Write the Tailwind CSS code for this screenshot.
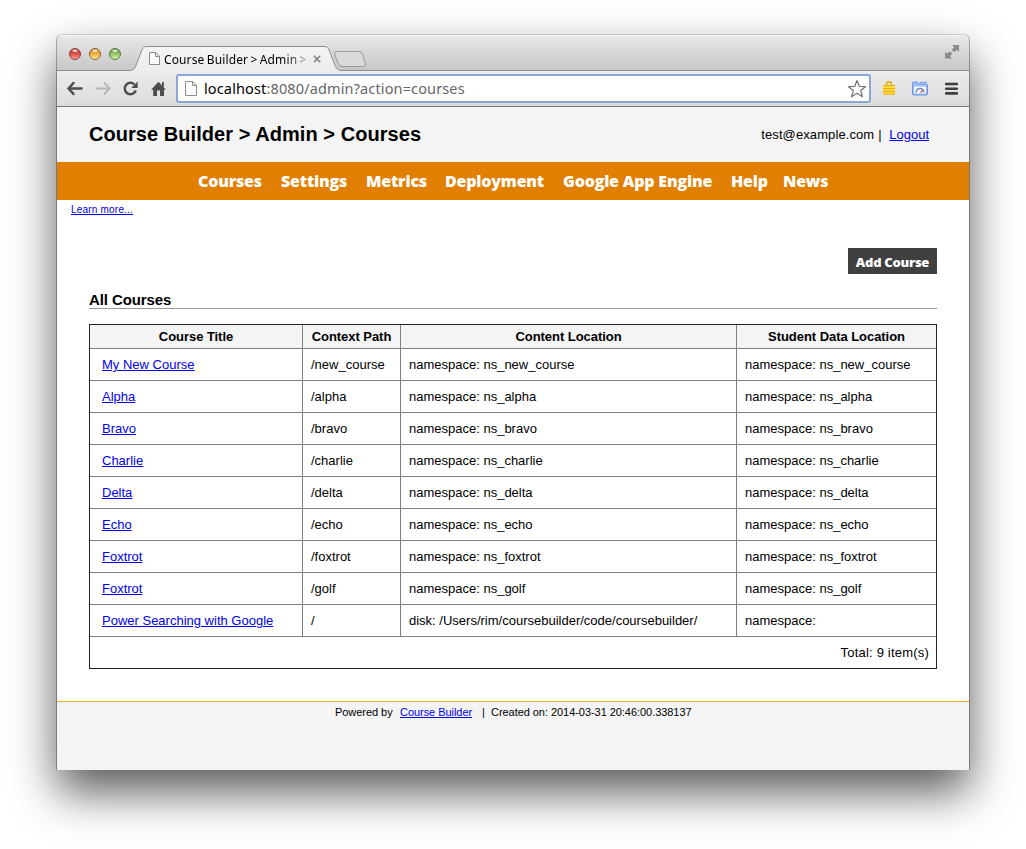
<!DOCTYPE html>
<html lang="en">
<head>
<meta charset="utf-8">
<title>Course Builder &gt; Admin &gt; Courses</title>
<script src="https://cdn.jsdelivr.net/npm/@tailwindcss/browser@4"></script>
</head>
<body class="h-[849px] overflow-hidden bg-white pt-[35px] pl-[57px] font-['Liberation_Sans',Arial,sans-serif] text-[13px] text-black">
<div class="flex h-[735px] w-[912px] flex-col rounded-t-[5px] bg-white shadow-[-1px_0_0_0_rgba(0,0,0,0.3),1px_0_0_0_rgba(0,0,0,0.3),0_-1px_0_0_rgba(0,0,0,0.15),0_22px_46px_rgba(0,0,0,0.65)]">

  <!-- Tab strip -->
  <div class="relative flex h-[36px] shrink-0 items-start">
    <svg class="absolute inset-0 rounded-t-[5px]" width="912" height="36" viewBox="0 0 912 36">
      <defs>
        <linearGradient id="strip" x1="0" y1="0" x2="0" y2="1"><stop offset="0" stop-color="#e9e9e9"/><stop offset="1" stop-color="#c6c6c6"/></linearGradient>
        <linearGradient id="tab" x1="0" y1="0" x2="0" y2="1"><stop offset="0" stop-color="#f4f4f4"/><stop offset="1" stop-color="#ececec"/></linearGradient>
        <linearGradient id="red" x1="0" y1="0" x2="0" y2="1"><stop offset="0" stop-color="#b53a33"/><stop offset=".5" stop-color="#dc5048"/><stop offset="1" stop-color="#ffa79b"/></linearGradient>
        <linearGradient id="amber" x1="0" y1="0" x2="0" y2="1"><stop offset="0" stop-color="#c07a22"/><stop offset=".5" stop-color="#eeb040"/><stop offset="1" stop-color="#fff09a"/></linearGradient>
        <linearGradient id="green" x1="0" y1="0" x2="0" y2="1"><stop offset="0" stop-color="#5c8a3c"/><stop offset=".5" stop-color="#93c765"/><stop offset="1" stop-color="#dcf7ae"/></linearGradient>
      </defs>
      <rect width="912" height="36" fill="url(#strip)"/>
      <path d="M0 .5H912" stroke="#f6f6f6"/>
      <path d="M0 35.5H74C78 35 78 33 79.500 29L84.500 16C86 12.500 87 11.500 90 11.500H267C270 11.500 271 12.500 272.500 16L277.500 29C279 33 280 35 284 35.500H912V37H0Z" fill="url(#tab)"/>
      <path d="M0 35.500H73C77 35 78 33 79.500 29L84.500 16C86 12.500 87 11.500 90 11.500H267C270 11.500 271 12.500 272.500 16L277.500 29C279 33 280 35 284 35.500H912" fill="none" stroke="#8e8e8e"/>
      <path d="M279.500 16.500H302Q304.500 16.500 305.500 19L308.300 28.500Q309.200 31.500 306.500 31.500H285Q282.500 31.500 281.500 29L277.700 19.500Q277 16.500 279.500 16.500Z" fill="#d9d9d9" stroke="#9a9a9a"/>
      <g stroke-width="1">
        <circle cx="18" cy="19" r="5.500" fill="url(#red)" stroke="#8a3f3a"/>
        <circle cx="38" cy="19" r="5.500" fill="url(#amber)" stroke="#8d6530"/>
        <circle cx="58" cy="19" r="5.500" fill="url(#green)" stroke="#587a42"/>
      </g>
      <g fill="#fff" opacity=".75"><ellipse cx="18" cy="15.800" rx="2.600" ry="1.300"/><ellipse cx="38" cy="15.800" rx="2.600" ry="1.300"/><ellipse cx="58" cy="15.800" rx="2.600" ry="1.300"/></g>
      <path d="M92.500 17.500H98.500L102.500 21.500V29.500H92.500ZM98.500 17.500V21.500H102.500" fill="#fafafa" stroke="#8c8c8c"/>
      <path d="M256.800 20.800L263.200 27.200M263.200 20.800L256.800 27.200" stroke="#808080" stroke-width="1.600"/>
      <g fill="#8a8a8a">
        <path d="M895 10H902V17L899.800 14.800L897.300 17.300L894.700 14.700L897.200 12.200Z"/>
        <path d="M888 16.500V23.500H895L892.800 21.300L895.300 18.800L892.700 16.200L890.200 18.700Z"/>
      </g>
    </svg>
    <div class="relative mt-[16px] ml-[107px] bg-linear-to-r from-black from-80% to-[#aaaaaa] bg-clip-text font-['Noto_Sans',sans-serif] text-[12px] leading-[17px] tracking-[0.12px] [word-spacing:-0.9px] whitespace-nowrap text-transparent">Course Builder &gt; Admin &gt;</div>
  </div>

  <!-- Toolbar -->
  <div class="flex h-[35px] shrink-0 items-center bg-linear-to-b from-[#ececec] to-[#dcdcdc]">
    <svg class="shrink-0" width="119" height="35" viewBox="0 0 119 35" fill="none">
      <path d="M24.500 17.500H12.500M16.500 12L11.500 17.500L16.500 23" stroke="#4d4d4d" stroke-width="2.500" stroke-linecap="round"/>
      <path d="M39.500 17.500H51.500M47.500 12L52.500 17.500L47.500 23" stroke="#b8b8b8" stroke-width="2.200" stroke-linecap="round"/>
      <path d="M77.300 13.300A5.700 5.700 0 1 0 78.800 19.500" stroke="#4d4d4d" stroke-width="2.500"/>
      <path d="M80.600 10.500V17H74.200Z" fill="#4d4d4d"/>
      <path d="M94 18.800L101.500 10.800L105 14.500V11H106.800V16.400L109 18.800H107V25H103V19.500H100V25H96.200V18.800Z" fill="#4d4d4d"/>
    </svg>
    <div class="flex h-[29px] w-[695px] items-center rounded-[3px] border-2 border-[#8ba6d9] bg-white">
      <svg class="ml-[7px] shrink-0" width="12" height="16" viewBox="0 0 12 16"><path d="M.5 .500H7.500L11.500 4.500V14.500H.5ZM7.500 .500V4.500H11.500" fill="#fafafa" stroke="#8c8c8c"/></svg>
      <span class="ml-[7px] mb-[2px] font-['Noto_Sans',sans-serif] text-[14.500px] leading-[20px] tracking-[0.13px] whitespace-nowrap text-[#666666]"><span class="text-black">localhost</span>:8080/admin?action=courses</span>
      <svg class="mr-[2px] ml-auto" width="20" height="20" viewBox="0 0 20 20"><path d="M10 1.500L12.300 7.300L18.500 7.700L13.700 11.600L15.400 17.700L10 14.300L4.600 17.700L6.300 11.600L1.500 7.700L7.700 7.300Z" fill="#fff" stroke="#777" stroke-width="1.300" stroke-linejoin="round"/></svg>
    </div>
    <svg width="98" height="35" viewBox="0 0 98 35">
      <path d="M15.500 14.500V12.500Q15.500 11 17 11H19Q20.500 11 20.500 12.500V14.500" fill="none" stroke="#e0a800" stroke-width="1.500"/>
      <rect x="12" y="14" width="12" height="9.500" rx="1" fill="#ffdc3c"/>
      <path d="M12 14.500H24M12 17.500H24M12 20.500H24M12 23H24" stroke="#e9ad16"/>
      <path d="M41.500 12.500V12Q41.500 11 42.500 11H46L47.500 13H55.500Q56.500 13 56.500 14V23Q56.500 24 55.500 24H42.500Q41.500 24 41.500 23Z" fill="#9ebcf5" stroke="#6d95e6"/>
      <path d="M48.500 11.500H56" stroke="#7fa2ea" stroke-width="1.500"/>
      <rect x="43" y="15.500" width="12" height="7" rx="1" fill="#f4f7ff"/>
      <path d="M45 21.500Q45.500 17.500 49 17.500Q52.500 17.500 53 21.500" fill="none" stroke="#7088b8" stroke-width="1.300"/>
      <path d="M49.500 21.500L52 19" stroke="#e25b50" stroke-width="1.400"/>
      <path d="M75.200 13H85.800M75.200 17.700H85.800M75.200 22.400H85.800" stroke="#3f3f3f" stroke-width="2.600" stroke-linecap="round"/>
    </svg>
  </div>

  <!-- Page header -->
  <header class="flex h-[56px] shrink-0 items-center justify-between border-t border-[#777777] bg-[#f4f4f4] pr-[40px] pl-[32px]">
    <h1 class="mb-[2px] text-[20px] leading-[24px] font-bold tracking-[0.05px]">Course Builder &gt; Admin &gt; Courses</h1>
    <div class="flex leading-[16px] whitespace-nowrap"><span class="w-[117px] tracking-[0.1px]">test@example.com</span><span class="w-[11px]">|</span><a class="text-[#0000ee] underline">Logout</a></div>
  </header>
  <nav class="flex h-[38px] shrink-0 items-center bg-[#e18000] pl-[141px] font-['Open_Sans',sans-serif] text-[16px] leading-[22px] font-extrabold tracking-[-0.2px] whitespace-nowrap text-white">
    <a class="w-[83px]">Courses</a><a class="w-[85px]">Settings</a><a class="w-[79px]">Metrics</a><a class="w-[118px]">Deployment</a><a class="w-[168px]">Google App Engine</a><a class="w-[52px]">Help</a><a>News</a>
  </nav>

  <!-- Content -->
  <main class="flex grow flex-col">
    <a class="mt-[4px] ml-[14px] self-start text-[10px] leading-[12px] tracking-[0.2px] text-[#0000ee] underline">Learn more...</a>
    <div class="mt-[32px] mr-[32px] flex h-[26px] w-[89px] items-center justify-center self-end bg-[#404040] pt-[2px] font-['Open_Sans',sans-serif] text-[13px] leading-[18px] font-extrabold tracking-[-0.25px] whitespace-nowrap text-white">Add Course</div>
    <h2 class="mx-[32px] mt-[17px] h-[18px] border-b border-[#999999] text-[15px] leading-[18px] font-bold tracking-[-0.1px]">All Courses</h2>
    <div class="mx-[32px] mt-[15px] border border-[#222222]">
      <table class="w-[846px] table-fixed border-separate border-spacing-0 leading-[15px] [&_a]:text-[#0000ee] [&_a]:underline [&_td]:h-[32px] [&_td]:border-r [&_td]:border-b [&_td]:border-[#808080] [&_td]:px-[8px] [&_td:first-child]:pl-[12px] [&_td:last-child]:border-r-0 [&_th]:h-[24px] [&_th]:border-r [&_th]:border-b [&_th]:border-[#808080] [&_th]:bg-[#f4f4f4] [&_th]:tracking-[-0.05px] [&_th:last-child]:border-r-0">
        <colgroup><col class="w-[213px]"><col class="w-[98px]"><col class="w-[336px]"><col class="w-[199px]"></colgroup>
        <thead><tr><th>Course Title</th><th>Context Path</th><th>Content Location</th><th>Student Data Location</th></tr></thead>
        <tbody>
          <tr><td><a>My New Course</a></td><td>/new_course</td><td>namespace: ns_new_course</td><td>namespace: ns_new_course</td></tr>
          <tr><td><a>Alpha</a></td><td>/alpha</td><td>namespace: ns_alpha</td><td>namespace: ns_alpha</td></tr>
          <tr><td><a>Bravo</a></td><td>/bravo</td><td>namespace: ns_bravo</td><td>namespace: ns_bravo</td></tr>
          <tr><td><a>Charlie</a></td><td>/charlie</td><td>namespace: ns_charlie</td><td>namespace: ns_charlie</td></tr>
          <tr><td><a>Delta</a></td><td>/delta</td><td>namespace: ns_delta</td><td>namespace: ns_delta</td></tr>
          <tr><td><a>Echo</a></td><td>/echo</td><td>namespace: ns_echo</td><td>namespace: ns_echo</td></tr>
          <tr><td><a>Foxtrot</a></td><td>/foxtrot</td><td>namespace: ns_foxtrot</td><td>namespace: ns_foxtrot</td></tr>
          <tr><td><a>Foxtrot</a></td><td>/golf</td><td>namespace: ns_golf</td><td>namespace: ns_golf</td></tr>
          <tr><td><a>Power Searching with Google</a></td><td>/</td><td>disk: /Users/rim/coursebuilder/code/coursebuilder/</td><td>namespace:</td></tr>
        </tbody>
      </table>
      <div class="flex h-[31px] items-center justify-end pr-[7px] tracking-[0.2px]">Total: 9 item(s)</div>
    </div>
  </main>

  <footer class="flex h-[69px] shrink-0 items-start border-t border-[#fcaf17] bg-[#f4f4f4] pt-[3px] pl-[278px] text-[11px] leading-[14px] tracking-[-0.05px] whitespace-nowrap">
    <span class="w-[65px]">Powered by</span><a class="w-[82px] text-[#0000ee] underline">Course Builder</a><span class="w-[9px]">|</span><span>Created on: 2014-03-31 20:46:00.338137</span>
  </footer>
</div>
</body>
</html>
